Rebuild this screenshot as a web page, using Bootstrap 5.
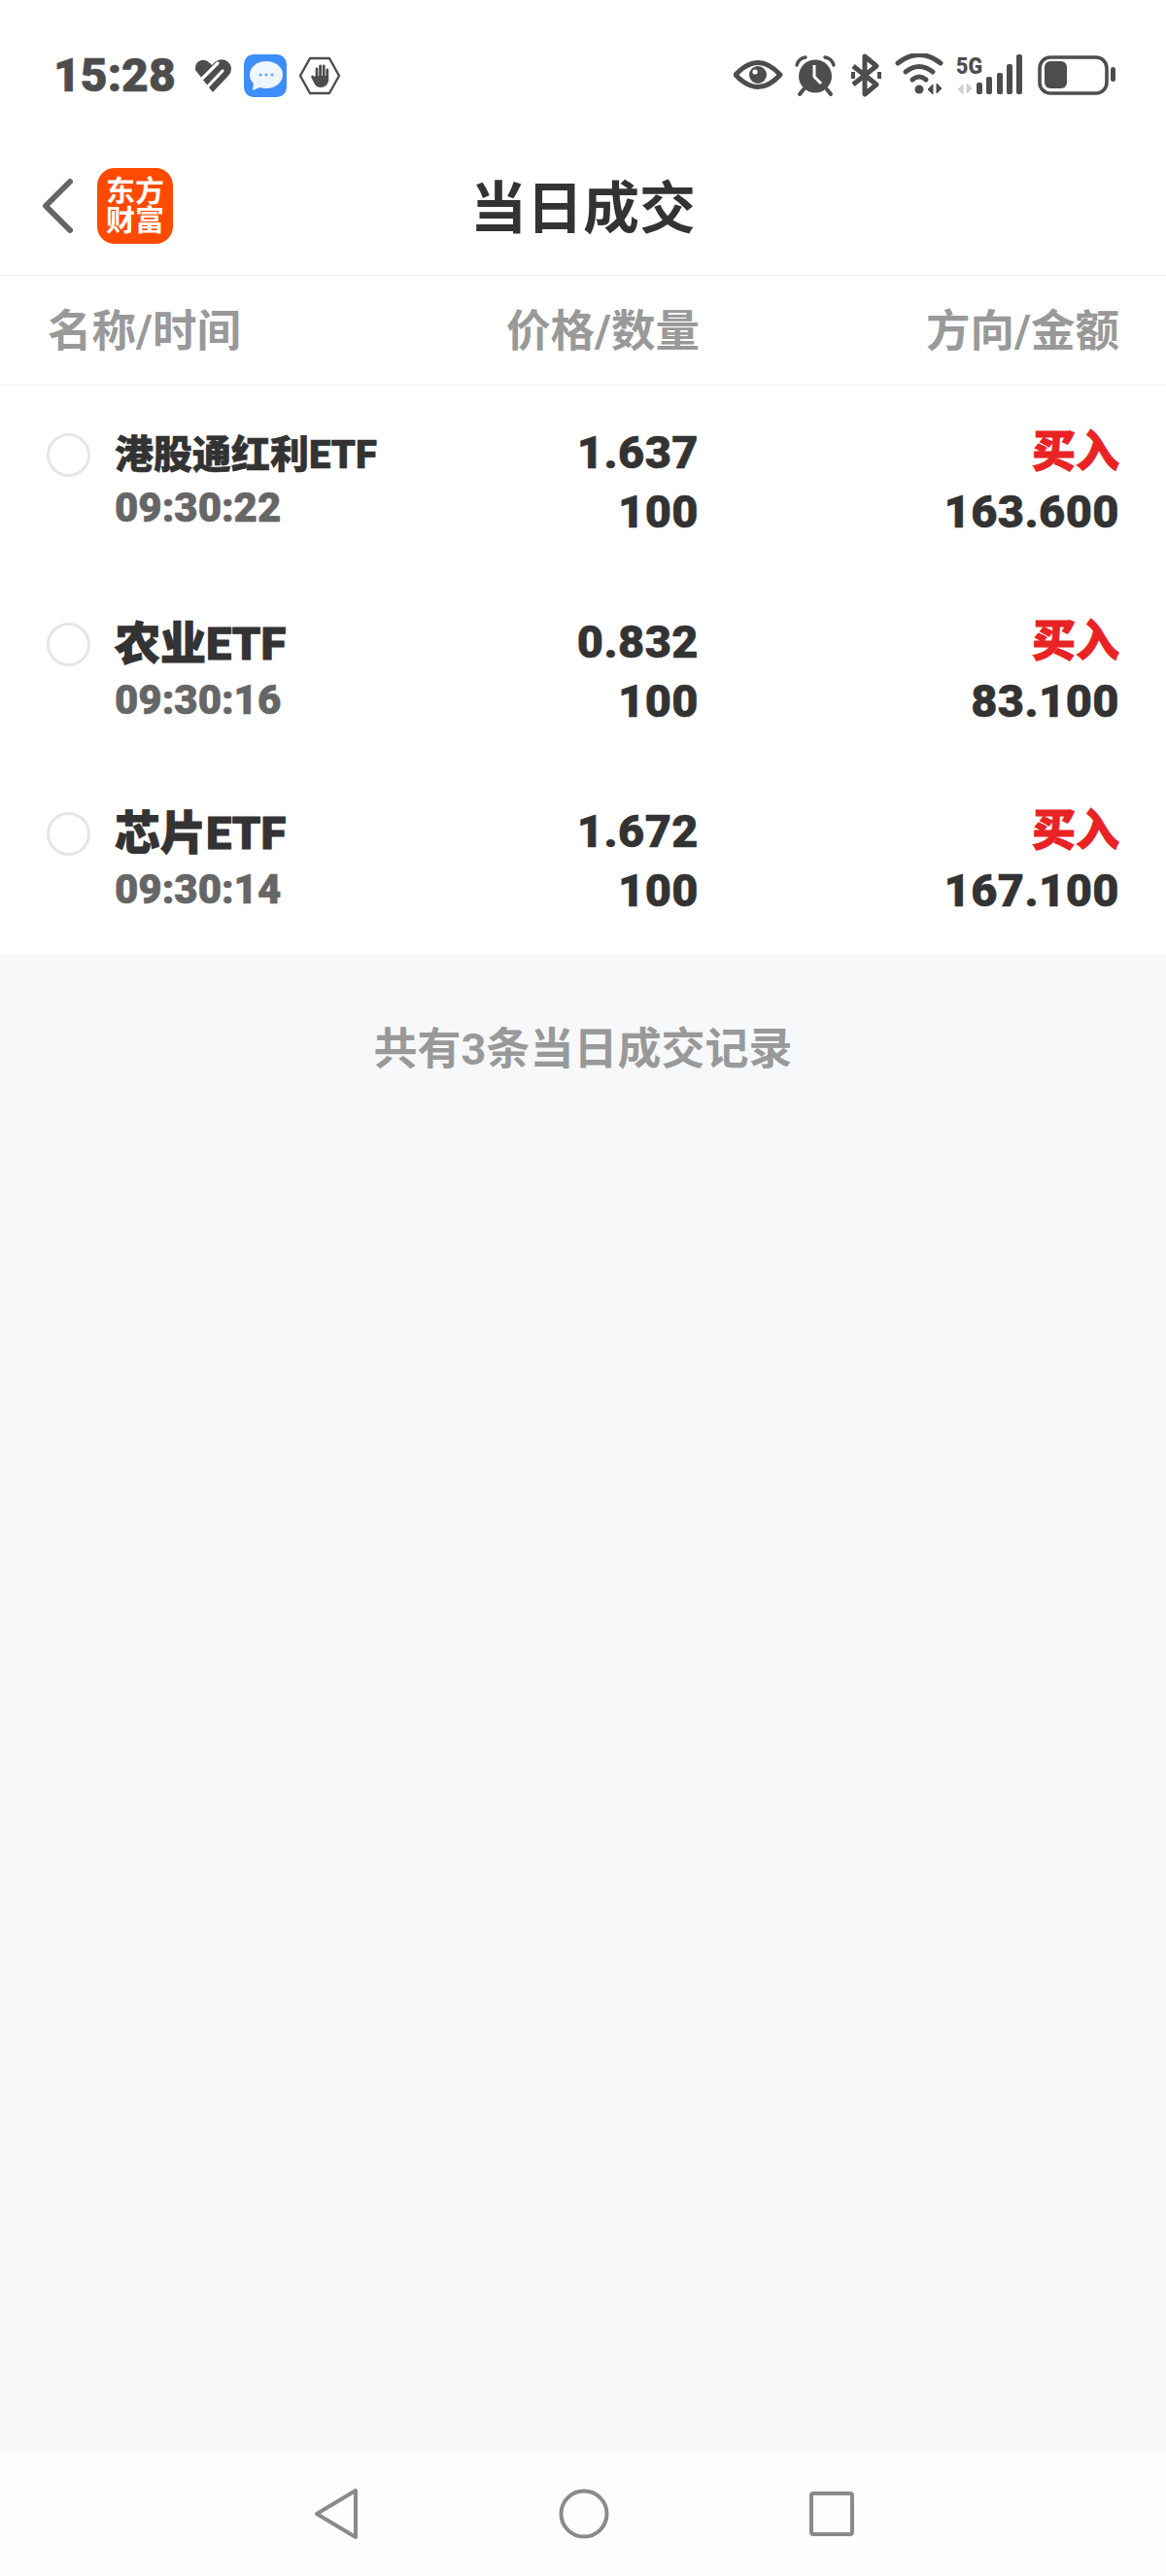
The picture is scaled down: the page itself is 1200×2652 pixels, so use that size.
<!DOCTYPE html>
<html lang="zh-CN">
<head>
    <meta charset="UTF-8">
    <meta name="viewport" content="width=device-width, initial-scale=1.0">
    <title>当日成交</title>
    <link href="https://cdn.jsdelivr.net/npm/bootstrap@5.3.0/dist/css/bootstrap.min.css" rel="stylesheet">
    <style>
        body { font-family: Roboto, "Noto Sans CJK SC", sans-serif; background: #f7f8fa; color: #333; height: 2652px; }
        .phone { height: 2652px; }
        .status-bar { height: 127px; padding: 0 50px 0 55px; background: #fff; }
        .clock { font-size: 48px; font-weight: 900; color: #4d4d4d; line-height: 1; margin-right: 6px; -webkit-text-stroke: .6px #4d4d4d; }
        .status-left { gap: 12px; padding-top: 54px; }
        .status-right { padding-top: 55px; }
        .title-bar { height: 157px; background: #fff; border-bottom: 1px solid #eee; padding: 14px 0 0 43px; }
        .app-logo { width: 78px; height: 78px; background: #ff4a00; border-radius: 18px; color: #fff; font-size: 30px; font-weight: 700; line-height: 30px; margin-left: 25px; }
        .page-title { font-size: 58px; font-weight: 700; color: #333; line-height: 1; margin-top: 10px; }
        .col-heads { height: 113px; background: #fff; border-bottom: 1px solid #eee; padding: 4px 48px 0 49px; font-size: 45.5px; font-weight: 700; color: #999; white-space: nowrap; }
        .trade-list { background: #fff; }
        .trade-row { height: 195px; padding: 38px 48px 0 48px; }
        .cell-name { width: 480px; }
        .cell-price { width: 191px; }
        .cell-dir { width: 432px; }
        .tick { width: 45px; height: 45px; border: 3px solid #e6e6e6; border-radius: 50%; margin: 11px 25px 0 0; }
        .name-stack { padding-top: 3px; }
        .nm { font-size: 47px; font-weight: 900; line-height: 60px; height: 60px; color: #333; -webkit-text-stroke: 1px #333; }
        .nm-long { font-size: 40px; line-height: 62px; height: 57px; -webkit-text-stroke: .6px #333; }
        .tm { font-size: 42px; font-weight: 900; line-height: 56px; color: #666; -webkit-text-stroke: .6px #666; }
        .val { font-size: 47px; font-weight: 900; line-height: 61px; color: #333; letter-spacing: .4px; -webkit-text-stroke: .5px #333; }
        .buy { font-size: 45px; font-weight: 900; line-height: 61px; color: #e92323; -webkit-text-stroke: 1px #e92323; }
        .tally { font-size: 45px; font-weight: 700; color: #999; padding-top: 68px; line-height: 62px; }
        .nav-strip { height: 128px; background: #fdfdfd; margin-top: auto; }
        .nav-mid { margin: 0 206px 0 205px; }
    </style>
</head>
<body>
<div class="phone d-flex flex-column">

    <div class="status-bar d-flex justify-content-between align-items-start">
        <div class="status-left d-flex align-items-center">
            <span class="clock">15:28</span>
            <svg width="40" height="34" viewBox="5 9 40 34">
                <path d="M7 18 Q7 12 13 10 Q18 9 22 13 L24 15 L27 12 Q32 8 38 10 Q44 13 44 19 Q44 23 41 26 L25 43 L7 20 Z" fill="#4d4d4d"/>
                <path d="M12 31 L30 13 M17 40 L35 21" fill="none" stroke="#fff" stroke-width="3.2" stroke-linecap="round"/>
            </svg>
            <svg width="44" height="44" viewBox="0 0 44 44">
                <rect width="44" height="44" rx="10" fill="#3f8cfb"/>
                <ellipse cx="23" cy="21" rx="17" ry="14" fill="#eef6ff"/>
                <path d="M10 28 L9 37 L19 33 Z" fill="#eef6ff"/>
                <circle cx="17" cy="21" r="1.6" fill="#6ea6ee"/><circle cx="23" cy="21" r="1.6" fill="#6ea6ee"/><circle cx="29" cy="21" r="1.6" fill="#6ea6ee"/>
            </svg>
            <svg width="44" height="40" viewBox="0 0 44 40">
                <path d="M12 2 H32 L42 20 L32 38 H12 L2 20 Z" fill="none" stroke="#4d4d4d" stroke-width="2.4" stroke-linejoin="round"/>
                <path d="M19 13 V24 M22.6 10 V24 M26.2 10 V24 M29.8 14 V25" fill="none" stroke="#4d4d4d" stroke-width="2.8" stroke-linecap="round"/>
                <path d="M13 21 Q14 18 17 21 L18 20 H31 V25 Q30 32 23 32 Q18 32 16 27 Z" fill="#4d4d4d"/>
            </svg>
        </div>
        <div class="status-right d-flex align-items-center">
            <svg width="395" height="46" viewBox="0 0 395 46">
                <!-- eye -->
                <path d="M2 22 Q25 -3 48 22 Q25 47 2 22 Z" fill="none" stroke="#4d4d4d" stroke-width="5" stroke-linejoin="round"/>
                <circle cx="25" cy="22" r="9" fill="#4d4d4d"/><circle cx="22" cy="19" r="2.6" fill="#fff"/>
                <!-- alarm -->
                <circle cx="84" cy="23.5" r="17" fill="#4d4d4d"/>
                <path d="M65 12 Q67 5 74 4 M103 12 Q101 5 94 4" fill="none" stroke="#4d4d4d" stroke-width="3.4" stroke-linecap="round"/>
                <path d="M72 37 L68 42 M96 37 L100 42" stroke="#4d4d4d" stroke-width="4" stroke-linecap="round"/>
                <path d="M83 12 V24 L90 31" fill="none" stroke="#fff" stroke-width="3"/>
                <!-- bluetooth -->
                <path d="M123 13 L147 32 L135 42 V3 L147 13 L123 32" fill="none" stroke="#4d4d4d" stroke-width="5" stroke-linejoin="round"/>
                <rect x="121" y="19" width="4" height="7" fill="#4d4d4d"/><rect x="148" y="19" width="4" height="7" fill="#4d4d4d"/>
                <!-- wifi -->
                <path d="M169 10 Q191 -7 213 10" fill="none" stroke="#4d4d4d" stroke-width="5" stroke-linecap="round"/>
                <path d="M177 19 Q191 8 205 19" fill="none" stroke="#4d4d4d" stroke-width="5" stroke-linecap="round"/>
                <path d="M184 27 Q191 21 198 27" fill="none" stroke="#4d4d4d" stroke-width="5" stroke-linecap="round"/>
                <circle cx="191" cy="37" r="4.5" fill="#4d4d4d"/>
                <path d="M205 42 V32 L200 37 Z M209 31 V41 L214 36 Z" fill="#4d4d4d" stroke="#4d4d4d" stroke-width="1"/>
                <!-- 5G -->
                <text x="229" y="21" font-family="Roboto, sans-serif" font-size="24" font-weight="900" fill="#4d4d4d" textLength="27" lengthAdjust="spacingAndGlyphs">5G</text>
                <path d="M236 42 V32 L231 37 Z M240 31 V41 L245 36 Z" fill="#d0d0d0" stroke="#d0d0d0" stroke-width="1"/>
                <rect x="250" y="30" width="6" height="12" rx="2" fill="#4d4d4d"/>
                <rect x="260" y="24" width="6" height="18" rx="2" fill="#4d4d4d"/>
                <rect x="271" y="20" width="6" height="22" rx="2" fill="#4d4d4d"/>
                <rect x="281" y="11" width="6" height="31" rx="2" fill="#4d4d4d"/>
                <rect x="291" y="1" width="6" height="41" rx="2" fill="#4d4d4d"/>
                <!-- battery -->
                <rect x="315" y="4" width="69" height="37" rx="11" fill="none" stroke="#4d4d4d" stroke-width="3.6"/>
                <rect x="320" y="8" width="23" height="28" rx="6" fill="#4d4d4d"/>
                <rect x="388" y="14" width="5" height="15" rx="2.5" fill="#4d4d4d"/>
            </svg>
        </div>
    </div>

    <div class="title-bar d-flex align-items-center position-relative">
        <svg width="32" height="56" viewBox="0 0 32 56">
            <path d="M29 3 L4 28 L29 53" fill="none" stroke="#666" stroke-width="6" stroke-linecap="round" stroke-linejoin="round"/>
        </svg>
        <div class="app-logo d-flex align-items-center justify-content-center text-center">东方<br>财富</div>
        <div class="page-title position-absolute top-50 start-50 translate-middle">当日成交</div>
    </div>

    <div class="col-heads d-flex align-items-center">
        <div class="cell-name">名称/时间</div>
        <div class="cell-price text-end d-flex justify-content-end">价格/数量</div>
        <div class="cell-dir text-end flex-grow-1">方向/金额</div>
    </div>

    <div class="trade-list">
        <div class="trade-row d-flex">
            <div class="cell-name d-flex">
                <div class="tick flex-shrink-0"></div>
                <div class="name-stack">
                    <div class="nm nm-long">港股通红利ETF</div>
                    <div class="tm">09:30:22</div>
                </div>
            </div>
            <div class="cell-price text-end"><div class="val">1.637</div><div class="val">100</div></div>
            <div class="cell-dir text-end flex-grow-1"><div class="buy">买入</div><div class="val">163.600</div></div>
        </div>
        <div class="trade-row d-flex">
            <div class="cell-name d-flex">
                <div class="tick flex-shrink-0"></div>
                <div class="name-stack">
                    <div class="nm">农业ETF</div>
                    <div class="tm">09:30:16</div>
                </div>
            </div>
            <div class="cell-price text-end"><div class="val">0.832</div><div class="val">100</div></div>
            <div class="cell-dir text-end flex-grow-1"><div class="buy">买入</div><div class="val">83.100</div></div>
        </div>
        <div class="trade-row d-flex">
            <div class="cell-name d-flex">
                <div class="tick flex-shrink-0"></div>
                <div class="name-stack">
                    <div class="nm">芯片ETF</div>
                    <div class="tm">09:30:14</div>
                </div>
            </div>
            <div class="cell-price text-end"><div class="val">1.672</div><div class="val">100</div></div>
            <div class="cell-dir text-end flex-grow-1"><div class="buy">买入</div><div class="val">167.100</div></div>
        </div>
    </div>

    <div class="tally text-center">共有3条当日成交记录</div>

    <div class="nav-strip d-flex align-items-center justify-content-center">
        <svg width="48" height="54" viewBox="0 0 48 54">
            <path d="M44 3 V51 L4 27 Z" fill="none" stroke="#8a8a8a" stroke-width="4" stroke-linejoin="round"/>
        </svg>
        <svg class="nav-mid" width="52" height="52" viewBox="0 0 52 52">
            <circle cx="26" cy="26" r="23.5" fill="none" stroke="#8a8a8a" stroke-width="4"/>
        </svg>
        <svg width="46" height="46" viewBox="0 0 46 46">
            <rect x="2" y="2" width="42" height="42" rx="2" fill="none" stroke="#8a8a8a" stroke-width="4"/>
        </svg>
    </div>
</div>
<script src="https://cdn.jsdelivr.net/npm/bootstrap@5.3.0/dist/js/bootstrap.bundle.min.js"></script>
</body>
</html>
